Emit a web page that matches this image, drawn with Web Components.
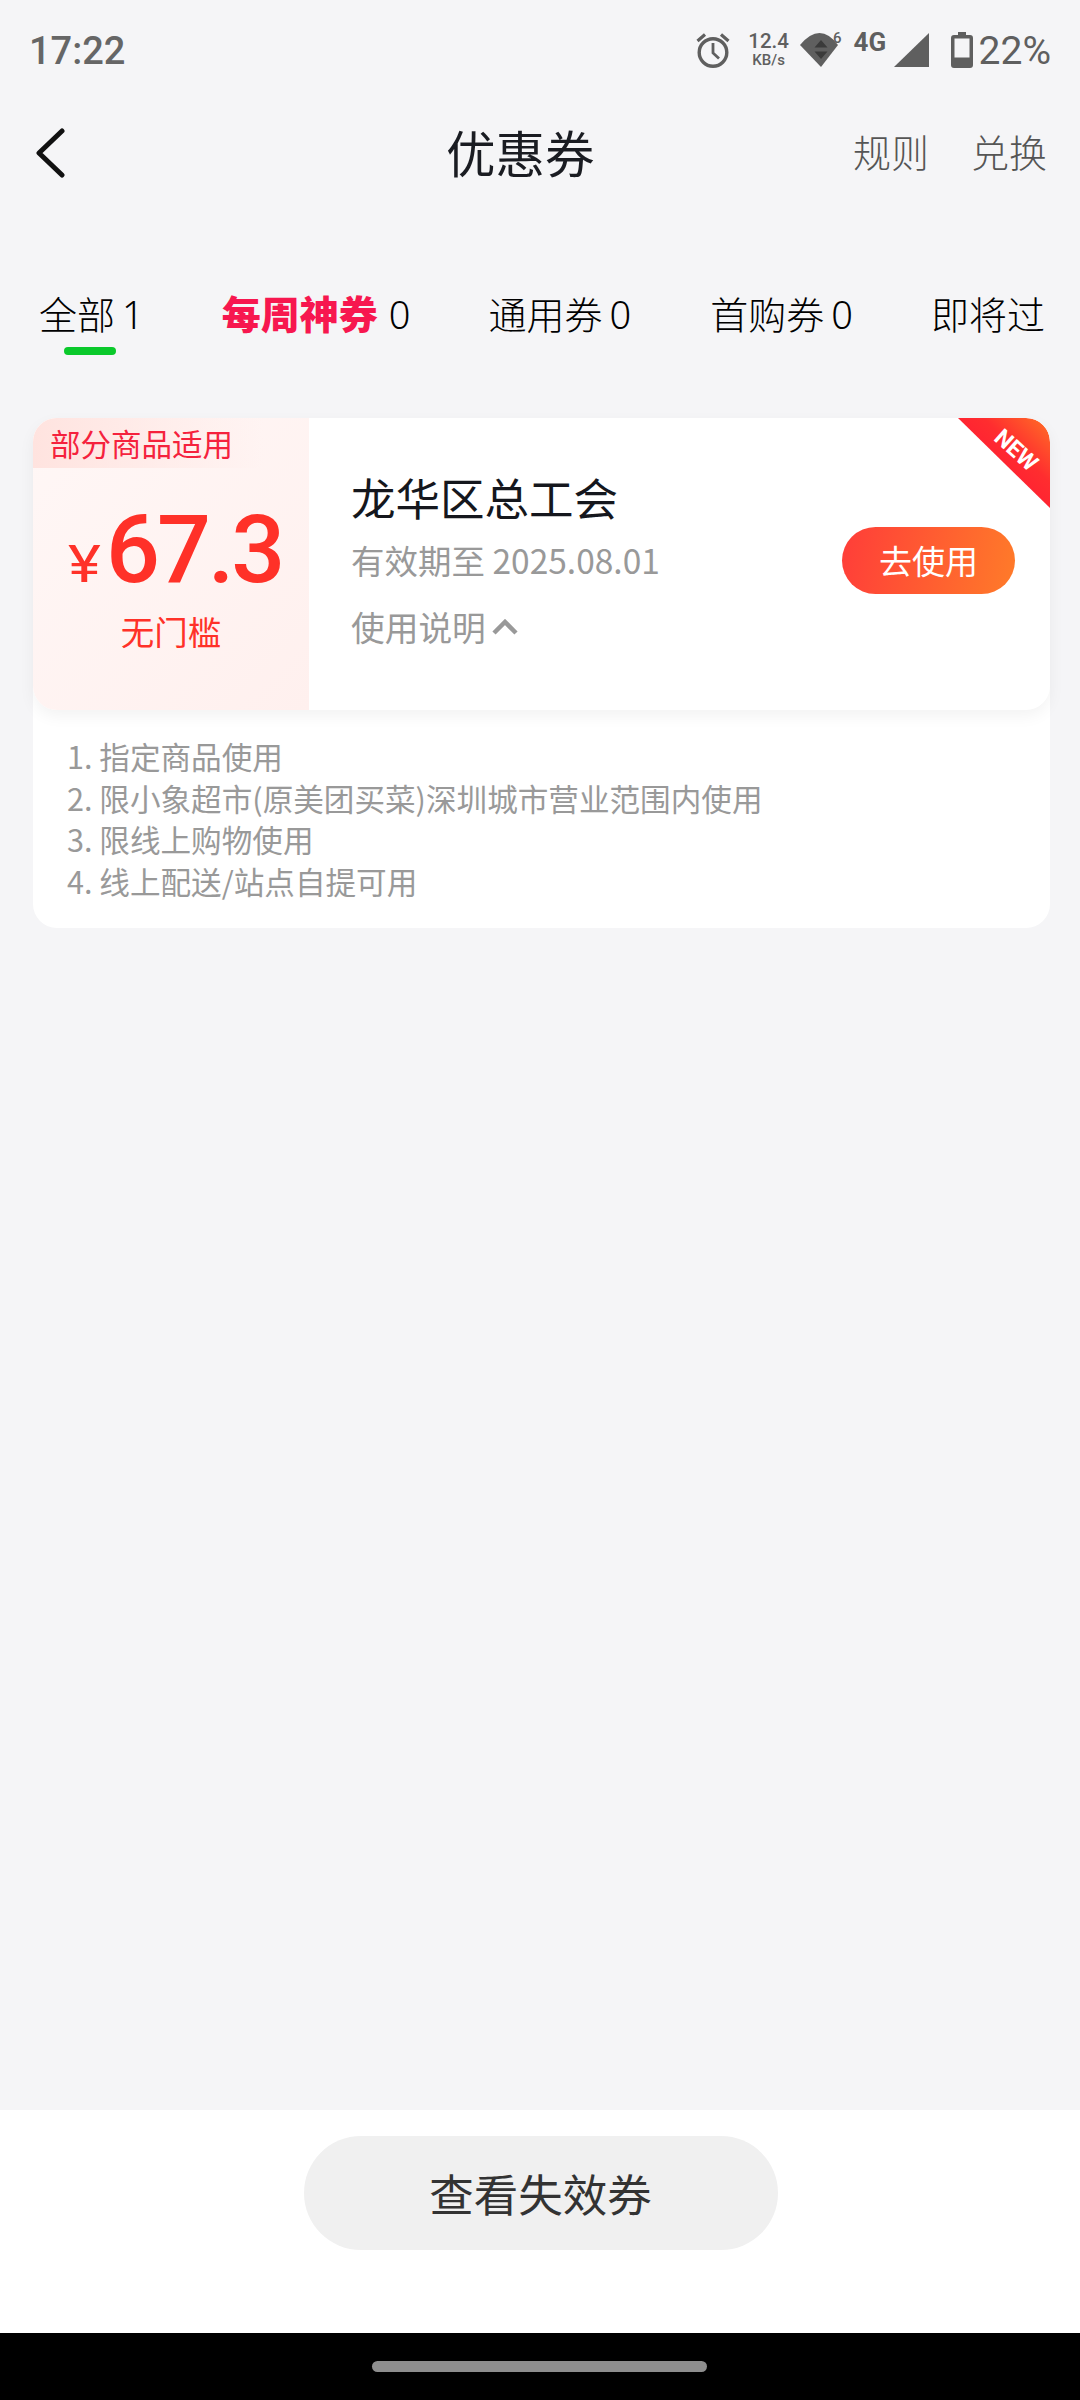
<!DOCTYPE html>
<html lang="zh">
<head>
<meta charset="utf-8">
<title>优惠券</title>
<style>
  html, body { margin: 0; height: 100%; }
  body {
    width: 1080px;
    height: 2400px;
    overflow: hidden;
    display: flex;
    flex-direction: column;
    background: #f5f5f7;
    font-family: "Noto Sans CJK SC", "Noto Sans", sans-serif;
  }
  page-body { flex: 1; }
</style>
</head>
<body>
<status-bar></status-bar>
<nav-bar heading="优惠券"></nav-bar>
<coupon-tabs></coupon-tabs>
<page-body>
  <coupon-card name="龙华区总工会" amount="67.3" expire="2025.08.01" tag="部分商品适用" limit="无门槛">
    <li>指定商品使用</li>
    <li>限小象超市(原美团买菜)深圳城市营业范围内使用</li>
    <li>限线上购物使用</li>
    <li>线上配送/站点自提可用</li>
  </coupon-card>
</page-body>
<bottom-bar label="查看失效券"></bottom-bar>
<home-indicator></home-indicator>

<script>
class StatusBar extends HTMLElement {
  constructor() {
    super()
    this.attachShadow({ mode: "open" })
    this.shadowRoot.innerHTML = `
      <time>17:22</time>
      <icons>
        <svg style="margin-left:0" width="34" height="36" viewBox="0 0 34 36" fill="none" stroke="#5f5f5f">
          <circle cx="17" cy="20.500" r="13.800" stroke-width="3.400"/>
          <path d="M17 11v10l6 5.500" stroke-width="2.800"/>
          <path d="M1.500 9L9 2.500M32.500 9L25 2.500" stroke-width="3.200"/>
        </svg>
        <speed>
          <b>12.4</b>
          <small>KB/s</small>
        </speed>
        <svg style="margin-left:11px" width="44" height="44" viewBox="0 -8 44 44">
          <path d="M0 13Q20-11 38 13L21 35Z" fill="#5f5f5f"/>
          <path d="M21 8l6.500 7.500h-13ZM21 27l-6.500-7.500h13Z" fill="#3a3a3a"/>
          <text x="33" y="11" font-size="15" font-weight="500" fill="#5f5f5f" font-family="Roboto, sans-serif">6</text>
        </svg>
        <net>4G</net>
        <svg style="margin-left:8px" width="35" height="36" viewBox="0 0 35 36">
          <path d="M35 1v34H0Z" fill="#5f5f5f"/>
        </svg>
        <svg style="margin-left:22px" width="22" height="36" viewBox="0 0 22 36">
          <path d="M7 0h8v3h4a3 3 0 0 1 3 3v27a3 3 0 0 1-3 3H3a3 3 0 0 1-3-3V6a3 3 0 0 1 3-3h4Z" fill="#5f5f5f"/>
          <rect x="3.500" y="6.500" width="15" height="19" fill="#f5f5f7"/>
        </svg>
        <pct>22%</pct>
      </icons>

      <style>
        :host {
          display: flex;
          align-items: center;
          justify-content: space-between;
          height: 102px;
          padding: 0 29px;
          box-sizing: border-box;
          color: #5f5f5f;
          font-family: Roboto, sans-serif;
        }
        time { font-size: 38px; font-weight: 500; color: #666; }
        icons { display: flex; align-items: center; }
        svg { margin-top: -3px; }
        svg[height="44"] { margin-top: -11px; }
        speed { display: flex; flex-direction: column; align-items: center; width: 40px; margin: -3px 0 0 19px; }
        speed b { font-size: 20.500px; font-weight: 500; line-height: 20px; }
        speed small { font-size: 15px; font-weight: 500; line-height: 18px; }
        net { width: 32px; font-size: 26px; font-weight: 700; line-height: 1; margin: -18px 0 0 10px; }
        pct { font-size: 39px; margin-left: 6px; }
      </style>
    `
  }
}

class NavBar extends HTMLElement {
  constructor() {
    super()
    this.attachShadow({ mode: "open" })
    const heading = this.getAttribute("heading") || ""
    this.shadowRoot.innerHTML = `
      <back>
        <svg width="30" height="50" viewBox="0 0 30 50" fill="none" stroke="#111" stroke-width="5" stroke-linecap="round" stroke-linejoin="round">
          <path d="M27 3L4 25l23 22"/>
        </svg>
      </back>
      <h1>${heading}</h1>
      <actions>
        <span>规则</span>
        <span>兑换</span>
      </actions>

      <style>
        :host {
          display: grid;
          grid-template-columns: 411px auto 1fr;
          align-items: center;
          height: 102px;
          padding: 0 33px 0 35px;
          box-sizing: border-box;
        }
        back { display: flex; }
        h1 { margin: -2px 0 0; font-size: 49.500px; font-weight: 400; line-height: 72px; color: #1a1c22; }
        actions { display: flex; justify-content: flex-end; gap: 42px; font-size: 38px; font-weight: 300; line-height: 56px; margin-top: -4px; color: #555; }
      </style>
    `
  }
}

class CouponTabs extends HTMLElement {
  constructor() {
    super()
    this.attachShadow({ mode: "open" })
    this.shadowRoot.innerHTML = `
      <tab class="active">全部<n>1</n></tab>
      <tab class="promo"><em>每周神券</em><n>0</n></tab>
      <tab>通用券<n>0</n></tab>
      <tab>首购券<n>0</n></tab>
      <tab class="cut">即将过</tab>

      <style>
        :host {
          display: flex;
          align-items: center;
          height: 214px;
          padding: 4px 0 0 39px;
          box-sizing: border-box;
          gap: 78px;
          font-size: 38px;
          font-weight: 300;
          color: #000;
          white-space: nowrap;
          overflow: hidden;
        }
        tab { position: relative; display: block; line-height: 56px; }
        n { margin-left: 7px; font-family: "Noto Sans", sans-serif; }
        em { font-style: normal; font-weight: 900; font-size: 39px; color: #f7174f; }
        .promo n { margin-left: 11px; }
        .promo + tab { margin-right: 1px; }
        .active::after {
          content: "";
          position: absolute;
          left: 25px;
          bottom: -13px;
          width: 52px;
          height: 8px;
          border-radius: 4px;
          background: #0ac92b;
        }
      </style>
    `
  }
}

class CouponCard extends HTMLElement {
  constructor() {
    super()
    this.attachShadow({ mode: "open" })
    const attr = (k) => this.getAttribute(k) || ""
    this.shadowRoot.innerHTML = `
      <main>
        <price>
          <tag>${attr("tag")}</tag>
          <amount><i>¥</i><b>${attr("amount")}</b></amount>
          <limit>${attr("limit")}</limit>
        </price>
        <info>
          <name>${attr("name")}</name>
          <expire>有效期至 ${attr("expire")}</expire>
          <toggle>使用说明
            <svg width="26" height="16" viewBox="0 0 26 16" fill="none" stroke="#999" stroke-width="4.500">
              <path d="M2 14L13 3l11 11"/>
            </svg>
          </toggle>
        </info>
        <use-btn>去使用</use-btn>
        <ribbon>
          <svg width="92" height="92" viewBox="0 0 92 92">
            <defs>
              <linearGradient id="rib" x1="0.400" y1="0.600" x2="1" y2="0">
                <stop offset="0" stop-color="#ff1f33"/>
                <stop offset="0.400" stop-color="#ff2d2f"/>
                <stop offset="1" stop-color="#ff7026"/>
              </linearGradient>
            </defs>
            <path d="M0 0H68A24 24 0 0 1 92 24V90Z" fill="url(#rib)"/>
            <text transform="translate(53 38) rotate(42)" text-anchor="middle" font-size="23" font-weight="700" fill="#fff" font-family="Roboto, sans-serif">NEW</text>
          </svg>
        </ribbon>
      </main>
      <ol><slot></slot></ol>

      <style>
        :host {
          display: block;
          margin: 0 30px 0 33px;
          background: #fff;
          border-radius: 24px;
        }
        main {
          position: relative;
          display: flex;
          align-items: stretch;
          height: 292px;
          border-radius: 24px;
          background: #fff;
          box-shadow: 0 6px 16px rgba(0, 0, 0, 0.05);
          overflow: hidden;
        }
        price {
          position: relative;
          flex: 0 0 276px;
          display: flex;
          flex-direction: column;
          align-items: center;
          padding: 77px 0 0 6px;
          box-sizing: border-box;
          color: #ff3128;
          background: linear-gradient(135deg, #fff7f6, #fff0ee);
        }
        tag {
          position: absolute;
          left: 0;
          top: 0;
          width: 230px;
          height: 50px;
          padding-left: 17px;
          box-sizing: border-box;
          font-size: 30.500px;
          line-height: 50px;
          color: #f5223d;
          white-space: nowrap;
          background: linear-gradient(90deg, #ffe3df, rgba(255, 240, 238, 0));
        }
        amount { display: flex; align-items: baseline; line-height: 110px; height: 110px; font-family: Roboto, sans-serif; }
        amount i { font-style: normal; font-size: 52px; margin-right: 13px; transform: translateX(2px) scaleX(1.2); transform-origin: left; }
        amount b { font-size: 95px; font-weight: 500; letter-spacing: -3px; }
        limit { font-size: 33.500px; line-height: 48px; margin: 2px 0 0 -6px; }
        info {
          flex: 1;
          display: flex;
          flex-direction: column;
          padding: 48px 0 0 42px;
        }
        name { font-size: 44.500px; line-height: 62px; color: #15171d; }
        expire { font-size: 33.500px; line-height: 50px; margin-top: 7px; color: #999; }
        toggle { display: flex; align-items: center; gap: 6px; font-size: 33.700px; line-height: 50px; margin-top: 17px; color: #999; }
        use-btn {
          align-self: flex-start;
          width: 173px;
          height: 67px;
          margin: 109px 35px 0 0;
          border-radius: 34px;
          text-align: center;
          font-size: 33px;
          line-height: 67px;
          color: #fff;
          background: linear-gradient(100deg, #ff3d39, #ff7b29);
        }
        ribbon { position: absolute; right: 0; top: 0; display: flex; }
        ol {
          margin: 0;
          padding: 26px 0 26px 34px;
          font-size: 30.600px;
          line-height: 41.600px;
          color: #999;
          list-style: decimal inside;
        }
      </style>
    `
  }
}

class BottomBar extends HTMLElement {
  constructor() {
    super()
    this.attachShadow({ mode: "open" })
    const label = this.getAttribute("label") || ""
    this.shadowRoot.innerHTML = `
      <pill>${label}</pill>

      <style>
        :host {
          display: flex;
          justify-content: center;
          height: 223px;
          padding: 26px 0 0 1px;
          box-sizing: border-box;
          background: #fff;
        }
        pill {
          width: 474px;
          height: 114px;
          border-radius: 57px;
          text-align: center;
          font-size: 44.500px;
          line-height: 114px;
          color: #333;
          background: #f0f0f0;
        }
      </style>
    `
  }
}

class HomeIndicator extends HTMLElement {
  constructor() {
    super()
    this.attachShadow({ mode: "open" })
    this.shadowRoot.innerHTML = `
      <bar></bar>

      <style>
        :host {
          display: flex;
          justify-content: center;
          height: 67px;
          padding: 28px 1px 0 0;
          box-sizing: border-box;
          background: #000;
        }
        bar { display: block; width: 335px; height: 11px; border-radius: 6px; background: #8e8e8e; }
      </style>
    `
  }
}

customElements.define("status-bar", StatusBar)
customElements.define("nav-bar", NavBar)
customElements.define("coupon-tabs", CouponTabs)
customElements.define("coupon-card", CouponCard)
customElements.define("bottom-bar", BottomBar)
customElements.define("home-indicator", HomeIndicator)
</script>
</body>
</html>
